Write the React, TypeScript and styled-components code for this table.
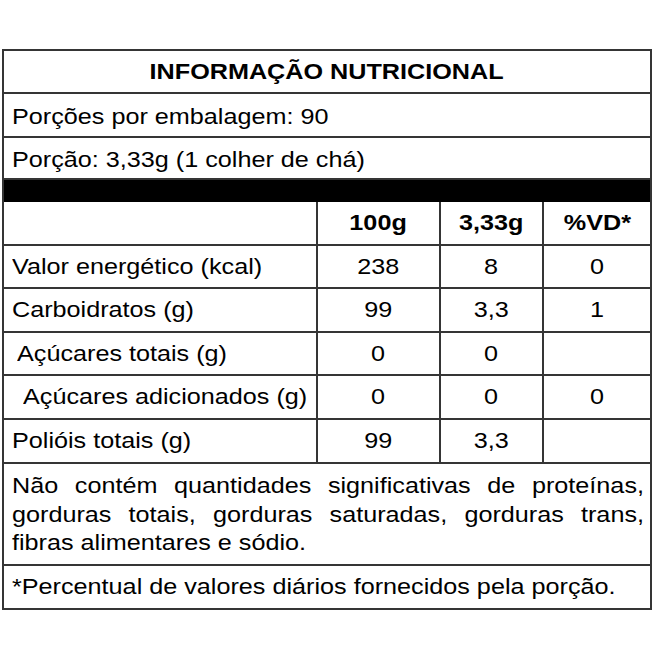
import React from "react";
import styled, { createGlobalStyle } from "styled-components";

const GlobalStyle = createGlobalStyle`
  html, body {
    margin: 0;
    padding: 0;
    background: #fff;
  }
  body {
    font-family: "Liberation Sans", Arial, sans-serif;
    color: #000;
  }
`;

const LINE = "2px solid #353535";
// the label's type is set a little wide
const STRETCH = 1.145;

const Page = styled.div`
  padding: 49px 0 0 2px;
`;

const Label = styled.div`
  width: 650px;
  box-sizing: border-box;
  border: ${LINE};
  font-size: 22px;
`;

const Text = styled.span<{ origin?: string }>`
  display: inline-block;
  white-space: nowrap;
  transform: scaleX(${STRETCH});
  transform-origin: ${p => p.origin || "left"} center;
`;

const Band = styled.div<{ h: number; center?: boolean; bold?: boolean }>`
  height: ${p => p.h}px;
  box-sizing: border-box;
  border-bottom: ${LINE};
  display: flex;
  align-items: center;
  justify-content: ${p => (p.center ? "center" : "flex-start")};
  padding: ${p => (p.center ? "0 8px" : "3px 8px 0")};
  font-weight: ${p => (p.bold ? 700 : 400)};
`;

const BlackBar = styled.div`
  height: 22px;
  background: #000;
`;

const Grid = styled.div`
  display: grid;
  grid-template-columns: 314px 123px 103px 106px;
`;

const Cell = styled.div<{ h: number; first?: boolean; last?: boolean; bold?: boolean; indent?: number }>`
  height: ${p => p.h}px;
  box-sizing: border-box;
  border-bottom: ${LINE};
  border-right: ${p => (p.last ? "none" : LINE)};
  display: flex;
  align-items: center;
  justify-content: ${p => (p.first ? "flex-start" : "center")};
  padding-left: ${p => (p.first ? 8 + (p.indent || 0) : 0)}px;
  font-weight: ${p => (p.bold ? 700 : 400)};
`;

const Note = styled.div`
  height: 102px;
  box-sizing: border-box;
  border-bottom: ${LINE};
  padding: 8px 0 0 8px;
`;

const NoteText = styled.p`
  margin: 0;
  width: ${632 / STRETCH}px;
  line-height: 28.5px;
  text-align: justify;
  transform: scaleX(${STRETCH});
  transform-origin: left top;
`;

const Footer = styled.div`
  height: 42px;
  display: flex;
  align-items: center;
  padding: 0 8px;
`;

const rows = [
  { label: "Valor energético (kcal)", indent: 0, a: "238", b: "8", c: "0", h: 43 },
  { label: "Carboidratos (g)", indent: 0, a: "99", b: "3,3", c: "1", h: 44 },
  { label: "Açúcares totais (g)", indent: 5, a: "0", b: "0", c: "", h: 43 },
  { label: "Açúcares adicionados (g)", indent: 11, a: "0", b: "0", c: "0", h: 44 },
  { label: "Polióis totais (g)", indent: 0, a: "99", b: "3,3", c: "", h: 44 },
];

export default function App() {
  return (
    <Page>
      <GlobalStyle />
      <Label>
        <Band h={43} center bold>
          <Text origin="center">INFORMAÇÃO NUTRICIONAL</Text>
        </Band>
        <Band h={44}>
          <Text>Porções por embalagem: 90</Text>
        </Band>
        <Band h={42}>
          <Text>Porção: 3,33g (1 colher de chá)</Text>
        </Band>
        <BlackBar />
        <Grid>
          <Cell h={44} first />
          <Cell h={44} bold><Text origin="center">100g</Text></Cell>
          <Cell h={44} bold><Text origin="center">3,33g</Text></Cell>
          <Cell h={44} bold last><Text origin="center">%VD*</Text></Cell>
          {rows.map(r => (
            <React.Fragment key={r.label}>
              <Cell h={r.h} first indent={r.indent}><Text>{r.label}</Text></Cell>
              <Cell h={r.h}><Text origin="center">{r.a}</Text></Cell>
              <Cell h={r.h}><Text origin="center">{r.b}</Text></Cell>
              <Cell h={r.h} last><Text origin="center">{r.c}</Text></Cell>
            </React.Fragment>
          ))}
        </Grid>
        <Note>
          <NoteText>
            Não contém quantidades significativas de proteínas, gorduras totais, gorduras saturadas, gorduras trans, fibras alimentares e sódio.
          </NoteText>
        </Note>
        <Footer>
          <Text>*Percentual de valores diários fornecidos pela porção.</Text>
        </Footer>
      </Label>
    </Page>
  );
}
